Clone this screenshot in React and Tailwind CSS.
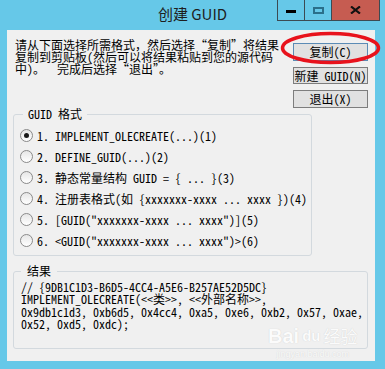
import React from "react";

const mono = "font-['Noto_Sans_Mono_CJK_SC','Noto_Sans_CJK_SC',monospace]";

function Radio({ checked, label }) {
  return (
    <div className="flex h-[21px] items-center">
      <span className="flex h-[13px] w-[13px] shrink-0 items-center justify-center rounded-full border border-[#8a8a8a] bg-linear-to-b from-[#e6e6e6] to-white">
        {checked && <span className="h-[5px] w-[5px] rounded-full bg-[#1a1a1a]" />}
      </span>
      <span className="ml-[4px] whitespace-pre text-[12px] leading-[12px] text-black">{label}</span>
    </div>
  );
}

function Btn({ children, primary }) {
  return (
    <div
      className={`flex h-[18px] items-center justify-center border bg-[#e1e1e1] text-[12px] leading-[12px] text-black ${
        primary ? "border-[#5b8bb5]" : "border-[#7d7d7d]"
      }`}
    >
      {children}
    </div>
  );
}

const options = [
  "1. IMPLEMENT_OLECREATE(...)(1)",
  "2. DEFINE_GUID(...)(2)",
  "3. 静态常量结构 GUID = { ... }(3)",
  "4. 注册表格式(如 {xxxxxxx-xxxx ... xxxx })(4)",
  '5. [GUID("xxxxxxx-xxxx ... xxxx")](5)',
  '6. <GUID("xxxxxxx-xxxx ... xxxx")>(6)',
];

export default function App() {
  return (
    <div className={`relative h-[369px] w-[385px] overflow-hidden bg-[#66c8e8] ${mono}`}>
      {/* title bar */}
      <div className="grid h-[30px] grid-cols-[1fr_auto_1fr]">
        <div />
        <div className="pt-[4px] font-['Noto_Sans_CJK_SC',sans-serif] text-[15px] leading-[20px] text-[#1e1e1e]">创建 GUID</div>
        <div className="flex items-start justify-end pr-[5px]">
          <div className="flex h-[21px] w-[27px] items-center justify-center border border-r-0 border-t-0 border-[#3c4a52]">
            <span className="mt-[3px] h-[3px] w-[10px] bg-black" />
          </div>
          <div className="flex h-[21px] w-[27px] items-center justify-center border border-r-0 border-t-0 border-[#3c4a52]">
            <span className="h-[7px] w-[11px] border-2 border-[#2a6f8a]" />
          </div>
          <div className="flex h-[21px] w-[49px] items-center justify-center border border-t-0 border-[#3c4a52] bg-[#c65c51]">
            <svg width="11" height="8" viewBox="0 0 11 8">
              <path d="M1 0.5 L10 7.5 M10 0.5 L1 7.5" stroke="#111" strokeWidth="2.2" />
            </svg>
          </div>
        </div>
      </div>

      {/* client area */}
      <div className="ml-[7px] mr-[10px] h-[331px] bg-[#f0f0f0]">
        <div className="flex h-[78px]">
          <div className="flex-1 whitespace-pre pl-[8px] pt-[9px] text-[12px] leading-[12px] text-black">
            {"请从下面选择所需格式，然后选择“复制”将结果\n复制到剪贴板(然后可以将结果粘贴到您的源代码\n中)。  完成后选择“退出”。"}
          </div>
          <div className="mr-[7px] flex w-[75px] flex-col gap-[6px] pt-[13px]">
            <Btn primary>复制(C)</Btn>
            <Btn>新建 GUID(N)</Btn>
            <Btn>退出(X)</Btn>
          </div>
        </div>

        <fieldset className="ml-[6px] h-[148px] w-[299px] rounded-[3px] border border-[#d3d9de] pl-[6px] pt-[5px]">
          <legend className="ml-[3px] px-[5px] text-[12px] leading-[12px] text-black">GUID 格式</legend>
          {options.map((o, i) => (
            <Radio key={i} checked={i === 0} label={o} />
          ))}
        </fieldset>

        <fieldset className="ml-[6px] mt-[9px] h-[84px] w-[355px] rounded-[3px] border border-[#d3d9de] pl-[7px] pt-[4px]">
          <legend className="px-[6px] text-[12px] leading-[12px] text-black">结果</legend>
          <div className="whitespace-pre text-[12px] leading-[12.4px] text-black">
            {"// {9DB1C1D3-B6D5-4CC4-A5E6-B257AE52D5DC}\nIMPLEMENT_OLECREATE(<<类>>, <<外部名称>>,\n0x9db1c1d3, 0xb6d5, 0x4cc4, 0xa5, 0xe6, 0xb2, 0x57, 0xae,\n0x52, 0xd5, 0xdc);"}
          </div>
        </fieldset>
      </div>

      {/* baidu watermark */}
      <div className="pointer-events-none absolute left-[268px] top-[326px] flex flex-col items-center text-[#fbfbfb] [text-shadow:0_0_1px_#c9c9c9]">
        <div className="flex items-center gap-[3px] font-['Liberation_Sans',sans-serif] text-[20px] font-bold leading-[20px]">
          <span>Bai</span>
          <span className="text-[15px] leading-[16px]">du</span>
          <span className="font-['Noto_Sans_CJK_SC',sans-serif] text-[17px] font-normal leading-[20px]">经验</span>
        </div>
        <div className="mt-[3px] font-['Liberation_Sans',sans-serif] text-[9px] leading-[10px]">jingyan.baidu.com</div>
      </div>

      {/* red annotation ellipse */}
      <svg className="pointer-events-none absolute left-0 top-0" width="385" height="369">
        <ellipse cx="330.5" cy="48" rx="48" ry="14.5" fill="none" stroke="#e8121c" strokeWidth="3.5" />
      </svg>
    </div>
  );
}
